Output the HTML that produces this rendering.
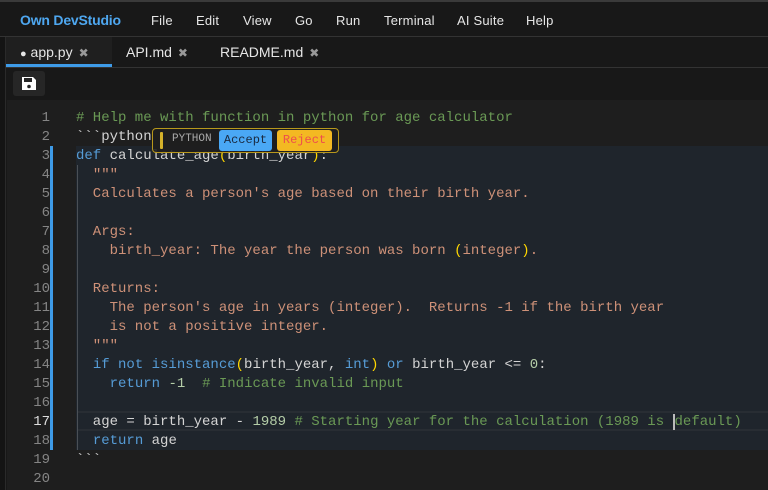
<!DOCTYPE html>
<html><head><meta charset="utf-8"><style>
*{margin:0;padding:0;box-sizing:border-box}
body{width:768px;height:490px;background:#181818;overflow:hidden;position:relative;font-family:"Liberation Sans",sans-serif;color:#ddd}
.top{position:absolute;left:0;top:0;width:768px;height:37px;background:#181818;border-top:2px solid #3a3a3a;border-bottom:1px solid #333}
.logo{position:absolute;left:20px;top:10px;font-size:14px;font-weight:bold;color:#4ea7f0;letter-spacing:-0.2px}
.menu{position:absolute;top:11px;font-size:13px;color:#e6e6e6;letter-spacing:0.2px}
.tabs{position:absolute;left:6px;top:37px;width:762px;height:31px;border-bottom:1px solid #333}
.tab{position:absolute;top:0;height:30px;font-size:14px;color:#e6e6e6;padding-top:7px}
.x{color:#999;font-size:12px;margin-left:6px}
.side{position:absolute;left:0;top:37px;width:6px;height:453px;background:#141414;border-right:1px solid #2a2a2a}
.save{position:absolute;left:13px;top:71px;width:32px;height:25px;background:#262626;border-radius:3px}
.ed{position:absolute;left:7px;top:100px;width:761px;height:390px;background:#1e1e1e}
.hl{position:absolute;left:76px;top:146px;width:692px;height:304px;background:#1f252c}
.cur{position:absolute;left:77px;top:411px;width:691px;height:20px;border-top:2px solid #282d33;border-bottom:2px solid #282d33}
.guide{position:absolute;left:77px;top:165px;width:1px;height:285px;background:#4a4f55}
.bar{position:absolute;left:50px;top:146px;width:3px;height:304px;background:#3e9be8}
.ln{position:absolute;left:20px;width:30px;text-align:right;font-family:"Liberation Mono",monospace;font-size:14px;color:#858585;line-height:19px}
.code{position:absolute;left:76px;font-family:"Liberation Mono",monospace;font-size:14px;line-height:19px;white-space:pre;color:#d4d4d4}
.c{color:#6a9955}.s{color:#ce9178}.k{color:#569cd6}.n{color:#b5cea8}.p{color:#ffd700}
.pop{position:absolute;left:152px;top:128px;width:187px;height:25px;border:1px solid #b8981c;border-radius:4px;background:rgba(30,30,30,.9)}
</style></head><body>
<div class="top">
<div class="logo">Own DevStudio</div>
<div class="menu" style="left:151px">File</div>
<div class="menu" style="left:196px">Edit</div>
<div class="menu" style="left:243px">View</div>
<div class="menu" style="left:295px">Go</div>
<div class="menu" style="left:336px">Run</div>
<div class="menu" style="left:384px">Terminal</div>
<div class="menu" style="left:457px">AI Suite</div>
<div class="menu" style="left:526px">Help</div>
</div>
<div class="side"></div>
<div class="tabs">
<div class="tab" style="left:0;width:106px;background:#1f1f1f;border-bottom:3px solid #3e9be8;padding-left:14px"><span style="font-size:11px">●</span> app.py<span class="x">✖</span></div>
<div class="tab" style="left:120px">API.md<span class="x">✖</span></div>
<div class="tab" style="left:214px">README.md<span class="x">✖</span></div>
</div>
<div class="save"><svg width="32" height="25" viewBox="0 0 32 25"><path d="M9 6h11l3 3v10H9z" fill="#fff"/><rect x="11" y="7" width="8" height="4" fill="#262626"/><circle cx="16" cy="15.5" r="1.8" fill="#262626"/></svg></div>
<div class="ed"></div>
<div class="hl"></div>
<div class="cur"></div>
<div class="guide"></div>
<div class="bar"></div>
<div class="ln" style="top:109px">1<br>2<br>3<br>4<br>5<br>6<br>7<br>8<br>9<br>10<br>11<br>12<br>13<br>14<br>15<br>16<br><span style="color:#ddd">17</span><br>18<br>19<br>20</div>
<div class="code" style="top:109px"><span class="c"># Help me with function in python for age calculator</span>
&#96;&#96;&#96;python
<span class="k">def</span> calculate_age<span class="p">(</span>birth_year<span class="p">)</span>:
  <span class="s">"""</span>
<span class="s">  Calculates a person's age based on their birth year.</span>

<span class="s">  Args:</span>
<span class="s">    birth_year: The year the person was born </span><span class="p">(</span><span class="s">integer</span><span class="p">)</span><span class="s">.</span>

<span class="s">  Returns:</span>
<span class="s">    The person's age in years (integer).  Returns -1 if the birth year</span>
<span class="s">    is not a positive integer.</span>
<span class="s">  """</span>
  <span class="k">if not isinstance</span><span class="p">(</span>birth_year, <span class="k">int</span><span class="p">)</span> <span class="k">or</span> birth_year &lt;= <span class="n">0</span>:
    <span class="k">return</span> <span class="n">-1</span>  <span class="c"># Indicate invalid input</span>

  age = birth_year - <span class="n">1989</span> <span class="c"># Starting year for the calculation (1989 is <span style="border-left:2px solid #bbb">default)</span></span>
  <span class="k">return</span> age
&#96;&#96;&#96;
</div>
<div class="pop">
<div style="position:absolute;left:7px;top:3px;width:3px;height:17px;background:#d4b12a;border-radius:1px"></div>
<div style="position:absolute;left:19px;top:4px;font-family:'Liberation Mono',monospace;font-size:11px;color:#aaa">PYTHON</div>
<div style="position:absolute;left:66px;top:1px;width:53px;height:21px;background:#4aa8f5;border-radius:3px;font-family:'Liberation Mono',monospace;font-size:12px;color:#1a2a40;text-align:center;line-height:21px">Accept</div>
<div style="position:absolute;left:124px;top:1px;width:55px;height:21px;background:#f3b922;border-radius:3px;font-family:'Liberation Mono',monospace;font-size:12px;color:#ef4d4d;text-align:center;line-height:21px">Reject</div>
</div>
</body></html>
